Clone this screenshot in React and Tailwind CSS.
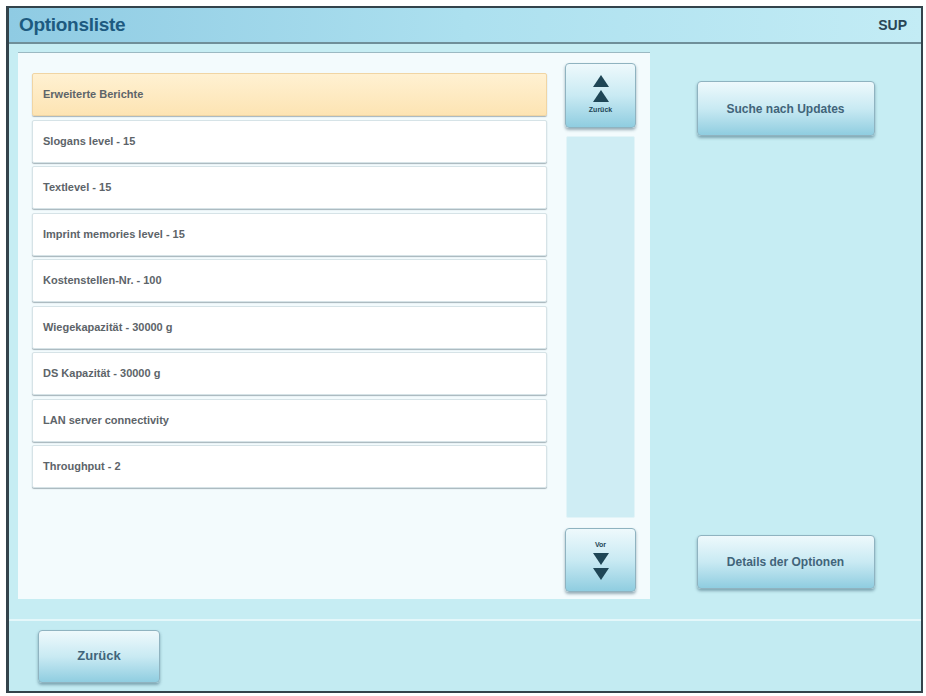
import React from 'react';

const options = [
  'Erweiterte Berichte',
  'Slogans level - 15',
  'Textlevel - 15',
  'Imprint memories level - 15',
  'Kostenstellen-Nr. - 100',
  'Wiegekapazität - 30000 g',
  'DS Kapazität - 30000 g',
  'LAN server connectivity',
  'Throughput - 2',
];

function Triangle({ up }) {
  return (
    <svg width="16" height="12" viewBox="0 0 16 12" className="block">
      {up ? <polygon points="8,0 16,12 0,12" fill="#1f4656" /> : <polygon points="0,0 16,0 8,12" fill="#1f4656" />}
    </svg>
  );
}

function PanelButton({ children, className = '' }) {
  return (
    <button
      className={`rounded-[4px] border border-[#8fb3c0] bg-gradient-to-b from-[#eef9fc] via-[#c9eaf3] to-[#8fcde0] shadow-[0_2px_3px_rgba(40,80,100,0.45)] text-[#41647a] font-bold ${className}`}
    >
      {children}
    </button>
  );
}

export default function App() {
  return (
    <div className="w-[926px] h-[696px] bg-white pt-[6px] pl-[6px] pr-[3px] pb-[3px]" style={{ fontFamily: '"Liberation Sans", Arial, sans-serif' }}>
      <div className="flex flex-col h-full border-l-[3px] border-t-2 border-r-2 border-b-2 border-[#33434b] bg-[#c6edf3]">
        {/* title bar */}
        <div className="h-[36px] flex items-center justify-between px-[10px] bg-gradient-to-r from-[#8fcbe3] via-[#ace0ef] to-[#c3ecf5] border-b-2 border-[#6f8f99]">
          <span className="text-[19px] font-bold text-[#1d5a80] tracking-[-0.3px]">Optionsliste</span>
          <span className="text-[14px] font-bold text-[#2a4656] mr-[4px]">SUP</span>
        </div>

        <div className="flex-1 flex pt-[8px] pb-[20px] border-b-2 border-[#e4f7fa]">
          {/* list panel */}
          <div className="ml-[9px] w-[632px] flex bg-[#f3fbfd] border-t border-[#9bb9c2] px-[14px] pt-[10px] pb-[7px]">
            <div className="w-[515px] mt-[10px] flex flex-col gap-[3.5px]">
              {options.map((o, i) => (
                <div
                  key={o}
                  className={`h-[43px] flex items-center pl-[10px] rounded-[2px] border border-[#d6e3e7] shadow-[0_1px_1px_rgba(90,110,120,0.5)] text-[11px] font-bold text-[#5d6469] ${
                    i === 0 ? 'bg-gradient-to-b from-[#fff1d2] to-[#fde4b3] border-[#f0d5a4]' : 'bg-white'
                  }`}
                >
                  {o}
                </div>
              ))}
            </div>

            {/* scroll column */}
            <div className="ml-[18px] w-[71px] flex flex-col">
              <PanelButton className="h-[65px] flex flex-col items-center justify-center gap-[3px]">
                <Triangle up />
                <Triangle up />
                <span className="text-[7px] text-[#1f4656]">Zurück</span>
              </PanelButton>
              <div className="flex-1 mt-[8px] mb-[10px] mx-[1px] bg-[#cfedf4] rounded-[2px] border border-[#e2f4f8]" />
              <PanelButton className="h-[64px] flex flex-col items-center justify-center gap-[3px]">
                <span className="text-[7px] text-[#1f4656]">Vor</span>
                <Triangle />
                <Triangle />
              </PanelButton>
            </div>
          </div>

          {/* side actions */}
          <div className="flex-1 flex flex-col items-center justify-between pt-[29px] pb-[10px]">
            <PanelButton className="w-[178px] h-[55px] text-[12px]">Suche nach Updates</PanelButton>
            <PanelButton className="w-[178px] h-[54px] text-[12px]">Details der Optionen</PanelButton>
          </div>
        </div>

        {/* footer */}
        <div className="h-[70px] flex items-center pl-[29px] bg-[#c3ebf2]">
          <PanelButton className="w-[122px] h-[53px] text-[13px] text-[#234d68]">Zurück</PanelButton>
        </div>
      </div>
    </div>
  );
}
